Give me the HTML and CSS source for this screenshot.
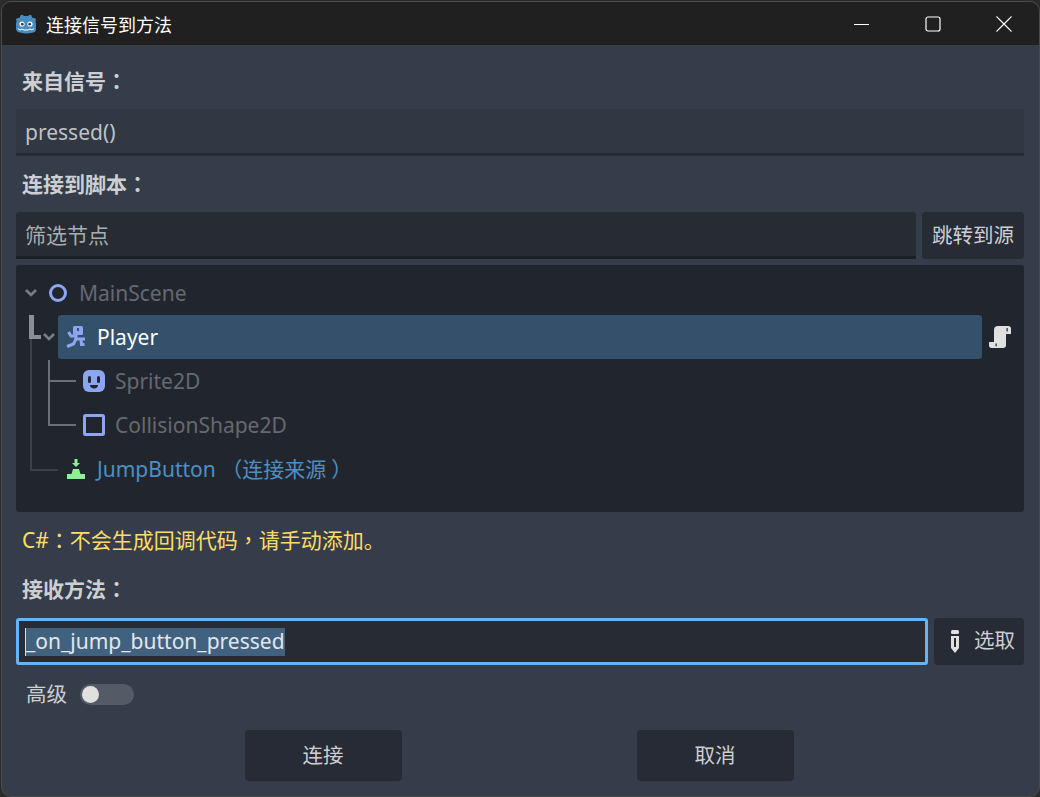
FILE: index.html
```html
<!DOCTYPE html>
<html lang="zh-CN">
  <head>
    <meta charset="UTF-8" />
    <title>连接信号到方法</title>
    <link rel="stylesheet" href="styles.css">
  </head>
  <body>
    <div class="window">
      <!-- 标题栏 -->
      <div class="titlebar">
        <svg class="logo" width="24" height="24" viewBox="0 0 24 24">
          <path fill="#478cbf" d="M8 2.500l2 1.600h4l2-1.600 1.600 1 .4 2 2 .5 2 1-.6 3 .6 1v6c0 2-1.200 3.200-3 3.600-2 .6-4.500.9-6.500.9s-4.500-.3-6.500-.9C4.200 20.200 2 19 2 17v-6l.6-1L2 7l2-1 2-.5.4-2z"/>
          <circle cx="8" cy="12" r="2.600" fill="#fff"/>
          <circle cx="16" cy="12" r="2.600" fill="#fff"/>
          <circle cx="8.300" cy="12.200" r="1.400" fill="#414042"/>
          <circle cx="15.700" cy="12.200" r="1.400" fill="#414042"/>
          <path fill="none" stroke="#fff" stroke-width="1" d="M4 16.500l2 1.500 2-1 2 1h4l2-1 2 1 2-1.500"/>
        </svg>
        <span class="title">连接信号到方法</span>
        <div class="winbtns">
          <svg width="16" height="16" viewBox="0 0 16 16"><path stroke="#fff" stroke-width="1" d="M0 8.500h15"/></svg>
          <svg width="16" height="16" viewBox="0 0 16 16"><rect x="1" y="1" width="14" height="14" rx="2" fill="none" stroke="#fff" stroke-width="1.200"/></svg>
          <svg width="16" height="16" viewBox="0 0 16 16"><path stroke="#fff" stroke-width="1.100" d="M.5.500l15 15M15.500.500l-15 15"/></svg>
        </div>
      </div>

      <div class="content">
        <div class="label label-first">来自信号<span class="punct" lang="zh-TW">：</span></div>
        <div class="field">pressed()</div>

        <div class="label label-script">连接到脚本<span class="punct" lang="zh-TW">：</span></div>
        <div class="filter-row">
          <div class="field filter">筛选节点</div>
          <div class="btn jump">跳转到源</div>
        </div>

        <!-- 节点树 -->
        <div class="tree">
          <svg class="lines" width="80" height="247" viewBox="0 0 80 247">
            <path fill="none" stroke="#3d4046" stroke-width="2" d="M15 74V205H42"/>
            <path fill="none" stroke="#6c6f74" stroke-width="2" d="M33 95V160H60M33 116H60"/>
            <path fill="#8b8e92" d="M13 50h5v20h7v4H13z"/>
          </svg>

          <div class="row">
            <svg class="arrow" width="12" height="8" viewBox="0 0 12 8"><path fill="none" stroke="#7a7d83" stroke-width="2.600" d="M1 1l5 5 5-5"/></svg>
            <svg class="icon" width="18" height="18" viewBox="0 0 18 18"><circle cx="9" cy="9" r="7.500" fill="none" stroke="#8da5f3" stroke-width="3"/></svg>
            <span class="name">MainScene</span>
          </div>

          <div class="row row-player">
            <svg class="arrow" width="12" height="8" viewBox="0 0 12 8"><path fill="none" stroke="#7a7d83" stroke-width="2.600" d="M1 1l5 5 5-5"/></svg>
            <div class="selected">
              <svg class="icon" width="20" height="22" viewBox="0 0 20 22">
                <rect x="7" y="0" width="10" height="9" rx="1.500" fill="#8da5f3"/>
                <rect x="11" y="2" width="2" height="3" fill="#35506a"/>
                <g fill="none" stroke="#8da5f3" stroke-width="3">
                  <path d="M2.500 6l2.500 4h6"/>
                  <path d="M10 8v5h9"/>
                  <path d="M10 13l-2.500 5L1 20.500"/>
                  <path d="M15 13l.5 5.500h3"/>
                </g>
              </svg>
              <span class="name-player">Player</span>
            </div>
            <svg class="script" width="22" height="22" viewBox="0 0 22 22">
              <path fill="#e0e0e0" d="M9 0h10c2 0 3 1 3 2.500V8h-5v11c0 2-1 3-3 3H2.500C1 22 0 21 0 19.500V16h5V4c0-2.500 1.500-4 4-4z"/>
              <path fill="#21262e" d="M6.500 17.500h1.200v2.700H6.500zM17.500 2h1.200v3.500h-1.200z"/>
            </svg>
          </div>

          <div class="row row-child">
            <svg class="icon" width="22" height="22" viewBox="0 0 22 22">
              <rect width="22" height="22" rx="6" fill="#8da5f3"/>
              <rect x="5" y="6" width="3" height="7" rx="1.500" fill="#21262e"/>
              <rect x="14" y="6" width="3" height="7" rx="1.500" fill="#21262e"/>
              <path fill="#21262e" d="M7 15h8c0 2-1.500 3.500-4 3.500S7 17 7 15z"/>
            </svg>
            <span class="name">Sprite2D</span>
          </div>

          <div class="row row-child">
            <svg class="icon" width="22" height="22" viewBox="0 0 22 22"><rect x="1.500" y="1.500" width="19" height="19" rx="1" fill="none" stroke="#8da5f3" stroke-width="3"/></svg>
            <span class="name">CollisionShape2D</span>
          </div>

          <div class="row row-jump">
            <svg class="icon" width="18" height="20" viewBox="0 0 18 20"><path fill="#8eef97" d="M7.500 0h3v4H13l-4 4-4-4h2.500zM6 10h6l1.500 5H18v5H0v-5h4.500z"/></svg>
            <span class="name-jump">JumpButton <span class="punct" lang="zh-TW">（</span>连接来源<span class="punct paren-end" lang="zh-TW">）</span></span>
          </div>
        </div>

        <div class="warning">C#<span class="punct" lang="zh-TW">：</span>不会生成回调代码<span class="punct" lang="zh-TW">，</span>请手动添加。</div>

        <div class="label label-method">接收方法<span class="punct" lang="zh-TW">：</span></div>
        <div class="method-row">
          <div class="method-input"><span class="sel">_on_jump_button_pressed</span></div>
          <div class="btn pick">
            <svg width="10" height="23" viewBox="0 0 10 23">
              <rect x="1" y="0" width="8" height="4" rx="1.500" fill="#e0e0e0"/>
              <path fill="#e0e0e0" d="M1 6h8v12l-4 5-4-5z"/>
              <rect x="4" y="8" width="2" height="9" fill="#252b34"/>
            </svg>
            <span class="pick-text">选取</span>
          </div>
        </div>

        <div class="adv-row">
          <span class="adv-text">高级</span>
          <div class="toggle"><div class="knob"></div></div>
        </div>

        <div class="actions">
          <div class="btn action">连接</div>
          <div class="btn action">取消</div>
        </div>
      </div>
    </div>
  </body>
</html>
```

FILE: styles.css
```css
* {
  margin: 0;
  padding: 0;
  box-sizing: border-box;
}
html,
body {
  width: 1040px;
  height: 797px;
  overflow: hidden;
  background-color: #2b2b2b;
}
body {
  font-family: "Noto Sans", "Noto Sans CJK SC", sans-serif;
  font-size: 21px;
  color: #cdcfd2;
}
/* 全角标点居中 */
.punct {
  font-family: "Noto Sans CJK TC", sans-serif;
  line-height: 0;
}
.paren-end {
  margin-left: 5px;
}
.window {
  width: 1039px;
  height: 796px;
  margin: 1px 0 0 1px;
  border-radius: 10px;
  background-color: #363d4a;
  border: 1px solid #4a4a4a;
  overflow: hidden;
  display: flex;
  flex-direction: column;
}

/* 标题栏 */
.titlebar {
  height: 43px;
  flex: none;
  background-color: #202020;
  display: flex;
  align-items: center;
  padding-left: 12px;
}
.logo {
  margin-right: 8px;
}
.title {
  font-family: "Noto Sans CJK SC", sans-serif;
  font-size: 18px;
  color: #fff;
}
.winbtns {
  margin-left: auto;
  display: flex;
  gap: 55px;
  padding-right: 27px;
}

.content {
  flex: 1;
  padding: 0 15px 0 14px;
  display: flex;
  flex-direction: column;
}
.label {
  font-weight: 700;
  height: 28px;
  line-height: 26px;
  padding-left: 6px;
}
.label-first {
  margin-top: 23px;
}
.label-script {
  margin-top: 15px;
}
.label-method {
  margin-top: 21px;
}

/* 输入框 */
.field {
  height: 47px;
  margin-top: 13px;
  padding-left: 9px;
  line-height: 47px;
  background-color: #313743;
  border-bottom: 3px solid #262b34;
  border-radius: 3px 3px 0 0;
  color: #bfc2c7;
}
.filter-row {
  display: flex;
  gap: 6px;
  margin-top: 13px;
}
.filter {
  flex: 1;
  margin-top: 0;
  background-color: #262b34;
  border-bottom-color: #1b1f26;
  color: #a9acb1;
}
.btn {
  background-color: #262b35;
  border-radius: 4px;
  display: flex;
  align-items: center;
  justify-content: center;
  font-size: 20.500px;
  padding-bottom: 3px;
}
.jump {
  width: 102px;
  height: 47px;
}

/* 节点树 */
.tree {
  position: relative;
  height: 247px;
  margin-top: 6px;
  padding-top: 6px;
  background-color: #21262e;
  border-radius: 3px;
}
.lines {
  position: absolute;
  left: 0;
  top: 0;
}
.row {
  height: 44px;
  display: flex;
  align-items: center;
  padding-left: 9px;
}
.arrow {
  margin-right: 12px;
}
.name {
  color: #66696f;
  margin-left: 12px;
}
.row-player {
  padding-left: 27px;
}
.row-player .arrow {
  margin-right: 3px;
}
.selected {
  width: 924px;
  height: 44px;
  display: flex;
  align-items: center;
  padding-left: 8px;
  background-color: #35506a;
  border-radius: 3px;
}
.name-player {
  color: #fff;
  margin-left: 11px;
}
.script {
  margin-left: 7px;
}
.row-child {
  padding-left: 67px;
}
.row-child .name {
  margin-left: 10px;
}
.row-jump {
  padding-left: 51px;
}
.name-jump {
  color: #4d8fc3;
  margin-left: 12px;
  margin-bottom: 2px;
}

.warning {
  margin-top: 15px;
  height: 28px;
  line-height: 26px;
  padding-left: 6px;
  color: #ffdd65;
}

/* 接收方法 */
.method-row {
  display: flex;
  gap: 6px;
  margin-top: 14px;
}
.method-input {
  flex: 1;
  height: 47px;
  padding-left: 6px;
  display: flex;
  align-items: center;
  background-color: #262b34;
  border: 3px solid #66b3f5;
  border-radius: 3px;
  color: #e4e6e9;
}
.sel {
  height: 28px;
  line-height: 27px;
  background-color: #41627f;
  border-left: 1px solid #e0e0e0;
}
.pick {
  width: 90px;
  height: 47px;
  gap: 14px;
  justify-content: flex-start;
  padding: 0 0 0 16px;
}
.pick-text {
  margin-bottom: 5px;
}

.adv-row {
  display: flex;
  align-items: center;
  gap: 13px;
  height: 28px;
  margin-top: 15px;
  padding-left: 10px;
}
.adv-text {
  font-size: 20.500px;
  margin-bottom: 3px;
}
.toggle {
  width: 54px;
  height: 21px;
  padding: 2px;
  background-color: #555b66;
  border-radius: 11px;
}
.knob {
  width: 17px;
  height: 17px;
  background-color: #e0e0e0;
  border-radius: 50%;
}

.actions {
  display: flex;
  justify-content: center;
  gap: 235px;
  margin-top: 22px;
  padding-right: 2px;
}
.action {
  width: 157px;
  height: 51px;
}
```
